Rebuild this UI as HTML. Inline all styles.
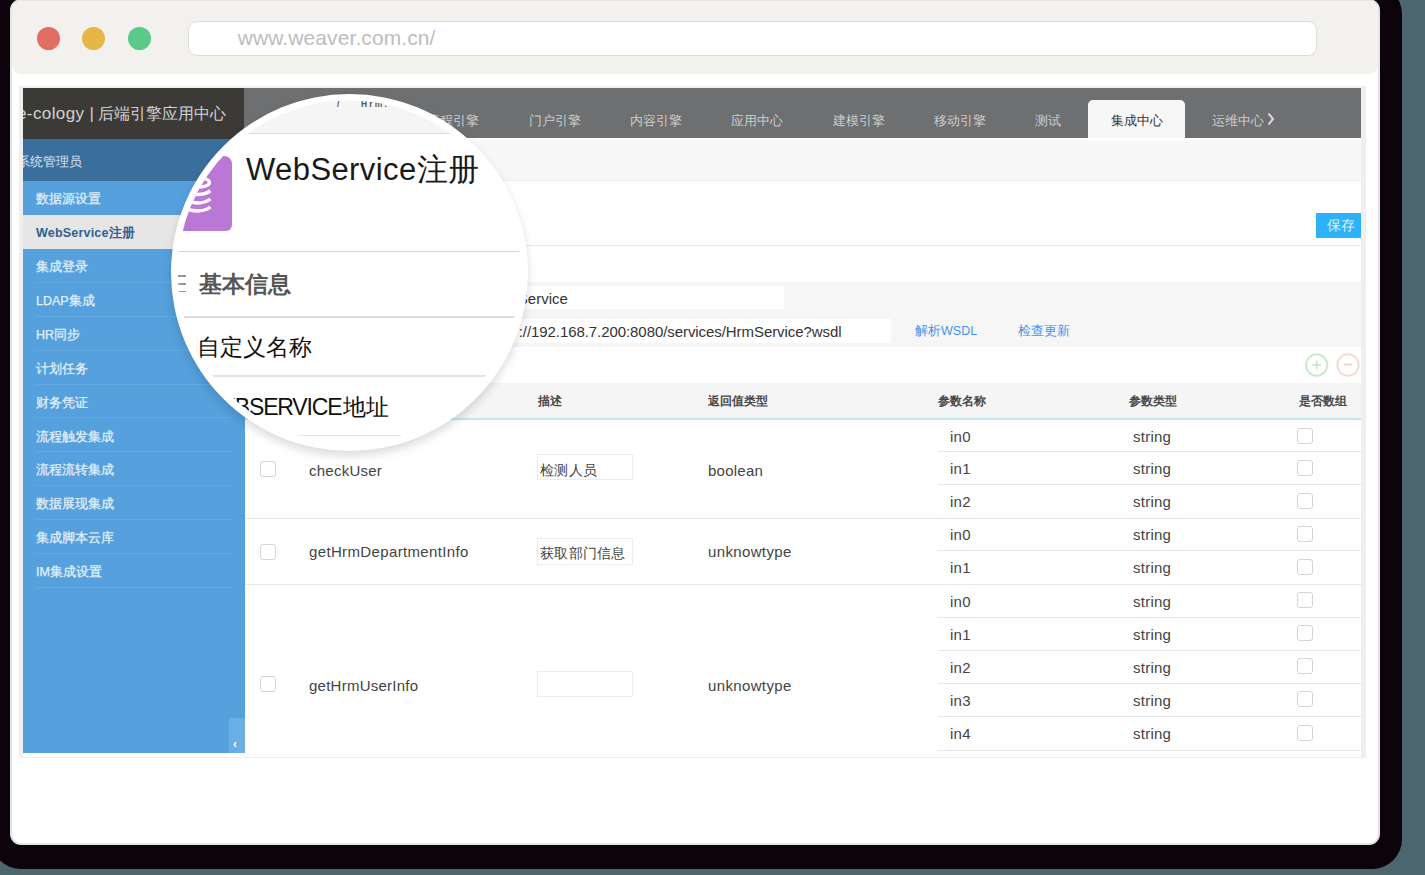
<!DOCTYPE html>
<html><head><meta charset="utf-8">
<style>
*{box-sizing:border-box;margin:0;padding:0}
html,body{width:1425px;height:875px;overflow:hidden;background:#4c6670;font-family:"Liberation Sans",sans-serif}
.a{position:absolute}
#dark{left:-8.6px;top:-16.3px;width:1410.2px;height:885.3px;background:#0d030a;border-radius:30px}
#win{left:9.8px;top:-1px;width:1369.8px;height:845.5px;background:#fff;border:2px solid #e4e4e4;border-radius:11px;overflow:hidden}
#tool{left:0;top:0;width:1365.8px;height:73.3px;background:#f2f1ed;border-radius:0 0 9px 9px}
.dot{width:23px;height:23px;border-radius:50%;top:25.8px}
#url{left:175.9px;top:20px;width:1129.3px;height:34.6px;background:#fff;border:1px solid #dcdcdc;border-radius:9px}
#urlt{left:49px;top:4.5px;font-size:21px;color:#bdbdbd;white-space:nowrap;letter-spacing:0.1px}
/* inner screenshot */
#frame{left:19px;top:85.5px;width:1347px;height:672.5px;background:#efefef}
#framein{left:4px;top:3px;width:1337.7px;height:668.5px;background:#fff}
.t{white-space:nowrap;line-height:1}
.side{left:23px;width:222px;height:33.9px;background:#55a0dd}
.side span{position:absolute;left:13px;top:10px;font-size:12.5px;color:#e4f1fb;font-weight:normal;white-space:nowrap;-webkit-text-stroke:0.25px #e4f1fb}
.sep{position:absolute;left:13px;right:13px;bottom:0;height:1px;background:#62a9e2}
.tab{top:113.5px;font-size:13px;color:#cdcdcd;white-space:nowrap;line-height:1}
.hl{height:1px;background:#e8e8e8}
.cb{width:16px;height:16px;border:1px solid #d4d4d4;border-radius:3px;background:#fff}
.cell{font-size:15px;color:#444;white-space:nowrap;line-height:1;letter-spacing:0.25px}
.inp{left:537px;width:95.5px;height:26.2px;border:1px solid #ececec;background:#fff}
.hd{top:395px;font-size:12px;color:#484848;font-weight:bold;white-space:nowrap;line-height:1}
</style></head><body>
<div class="a" id="dark"></div>
<div class="a" id="win">
  <div class="a" id="tool">
    <div class="a dot" style="left:25.3px;background:#e06e62"></div>
    <div class="a dot" style="left:70.7px;background:#e6b745"></div>
    <div class="a dot" style="left:116.2px;background:#5ac98a"></div>
    <div class="a" id="url"><div class="a t" id="urlt">www.weaver.com.cn/</div></div>
  </div>
</div>
<div class="a" id="frame"><div class="a" id="framein"></div></div>
<!-- header -->
<div class="a" style="left:23px;top:88px;width:221px;height:51px;background:#3b3a37;overflow:hidden">
  <div class="a t" style="left:-6px;top:17px;font-size:17px;color:#d2d2d2"><span style="letter-spacing:0.4px">e-cology |</span><span style="font-size:16px;margin-left:3.5px">后端引擎应用中心</span></div>
</div>
<div class="a" style="left:244px;top:88px;width:1117px;height:50px;background:#6d6f70"></div>
<div class="a tab" style="left:427px">流程引擎</div>
<div class="a tab" style="left:529px">门户引擎</div>
<div class="a tab" style="left:630px">内容引擎</div>
<div class="a tab" style="left:731px">应用中心</div>
<div class="a tab" style="left:833px">建模引擎</div>
<div class="a tab" style="left:934px">移动引擎</div>
<div class="a tab" style="left:1035px">测试</div>
<div class="a" style="left:1088px;top:100px;width:97px;height:38px;background:#f7f7f7;border-radius:5px 5px 0 0"></div>
<div class="a tab" style="left:1111px;color:#333">集成中心</div>
<div class="a tab" style="left:1212px">运维中心</div><svg class="a" style="left:1267px;top:112px" width="8" height="14"><path d="M1.5 1.5 L6 7 L1.5 12.5" fill="none" stroke="#d8d8d8" stroke-width="2"/></svg>
<!-- sidebar -->
<div class="a" style="left:23px;top:139px;width:222px;height:614px;background:#55a0dd"></div>
<div class="a" style="left:23px;top:139px;width:222px;height:42px;background:#3a6e9d;overflow:hidden">
  <span class="a t" style="left:-6.5px;top:17px;font-size:12.5px;color:#dae5f0">系统管理员</span>
</div>
<div class="a side" style="top:181px"><span>数据源设置</span></div>
<div class="a side" style="top:215px;background:#e6e6e6"><span style="color:#30608f;font-weight:bold;-webkit-text-stroke:0;letter-spacing:0.2px">WebService注册</span></div>
<div class="a side" style="top:249.0px"><span>集成登录</span><div class="sep"></div></div>
<div class="a side" style="top:282.9px"><span>LDAP集成</span><div class="sep"></div></div>
<div class="a side" style="top:316.8px"><span>HR同步</span><div class="sep"></div></div>
<div class="a side" style="top:350.7px"><span>计划任务</span><div class="sep"></div></div>
<div class="a side" style="top:384.6px"><span>财务凭证</span><div class="sep"></div></div>
<div class="a side" style="top:418.5px"><span>流程触发集成</span><div class="sep"></div></div>
<div class="a side" style="top:452.4px"><span>流程流转集成</span><div class="sep"></div></div>
<div class="a side" style="top:486.3px"><span>数据展现集成</span><div class="sep"></div></div>
<div class="a side" style="top:520.2px"><span>集成脚本云库</span><div class="sep"></div></div>
<div class="a side" style="top:554.1px"><span>IM集成设置</span><div class="sep"></div></div>
<div class="a" style="left:229px;top:718px;width:16px;height:35px;background:#6aaee3"><span class="a t" style="left:4px;top:20px;font-size:12px;color:#fff;font-weight:bold">‹</span></div>
<!-- content -->
<div class="a" style="left:245px;top:138px;width:1116px;height:43px;background:linear-gradient(#fff,#f7f7f7 5px);border-bottom:1px solid #ececec"></div>
<div class="a" style="left:1316px;top:213px;width:44.5px;height:24.5px;background:#2bb2f9"><span class="a t" style="left:11px;top:5px;font-size:14px;color:#e2f3fd">保存</span></div>
<div class="a hl" style="left:245px;top:245px;width:1116px"></div>
<div class="a" style="left:245px;top:281.5px;width:1116px;height:65.5px;background:#f6f6f6"></div>
<div class="a" style="left:380px;top:286px;width:404px;height:23px;background:#fff"></div>
<div class="a t" style="left:489.5px;top:291px;font-size:15px;color:#333">HrmService</div>
<div class="a" style="left:380px;top:319px;width:511px;height:23.5px;background:#fff"></div>
<div class="a t" style="left:518.7px;top:324px;font-size:15px;color:#333;letter-spacing:-0.07px">://192.168.7.200:8080/services/HrmService?wsdl</div>
<div class="a t" style="left:915px;top:325px;font-size:12.5px;color:#4592ef">解析WSDL</div>
<div class="a t" style="left:1018px;top:325px;font-size:12.5px;color:#4592ef">检查更新</div>
<svg class="a" style="left:1300px;top:348px" width="66" height="34"><g fill="none" stroke-width="2">
<circle cx="16.6" cy="17" r="10.7" stroke="#cbebce"/><path d="M12 17 H21 M16.6 12.5 V21.5" stroke="#bfe5c4" stroke-width="1.6"/>
<circle cx="48" cy="17" r="10.7" stroke="#f3dcd3"/><path d="M43.5 16.5 H52.5" stroke="#f1d3c6" stroke-width="1.8"/>
</g></svg>
<!-- table header -->
<div class="a" style="left:245px;top:382.5px;width:1116px;height:37.5px;background:#f5f5f5;border-bottom:2.5px solid #c4e4fb"></div>
<div class="a hd" style="left:538px">描述</div>
<div class="a hd" style="left:708px">返回值类型</div>
<div class="a hd" style="left:938px">参数名称</div>
<div class="a hd" style="left:1129px">参数类型</div>
<div class="a hd" style="left:1299px">是否数组</div>
<!-- rows -->
<div class="a hl" style="left:938px;top:451px;width:423px"></div>
<div class="a hl" style="left:938px;top:484px;width:423px"></div>
<div class="a hl" style="left:245px;top:518px;width:1116px"></div>
<div class="a hl" style="left:938px;top:550px;width:423px"></div>
<div class="a hl" style="left:245px;top:584px;width:1116px"></div>
<div class="a hl" style="left:938px;top:617px;width:423px"></div>
<div class="a hl" style="left:938px;top:650px;width:423px"></div>
<div class="a hl" style="left:938px;top:683px;width:423px"></div>
<div class="a hl" style="left:938px;top:716px;width:423px"></div>
<div class="a hl" style="left:938px;top:750px;width:423px"></div>
<div class="a cb" style="left:260px;top:460.5px"></div>
<div class="a cell" style="left:309px;top:462.6px">checkUser</div>
<div class="a inp" style="top:454px"></div>
<div class="a cell" style="left:540px;top:462.5px;font-size:14px">检测人员</div>
<div class="a cell" style="left:708px;top:462.6px">boolean</div>

<div class="a cb" style="left:260px;top:543.5px"></div>
<div class="a cell" style="left:309px;top:544px;letter-spacing:0.36px">getHrmDepartmentInfo</div>
<div class="a inp" style="top:538.4px"></div>
<div class="a cell" style="left:540px;top:545.5px;font-size:14px">获取部门信息</div>
<div class="a cell" style="left:708px;top:544px;letter-spacing:0.36px">unknowtype</div>

<div class="a cb" style="left:260px;top:676px"></div>
<div class="a cell" style="left:309px;top:678.3px">getHrmUserInfo</div>
<div class="a inp" style="top:670.5px"></div>
<div class="a cell" style="left:708px;top:678.3px;letter-spacing:0.36px">unknowtype</div>

<div class="a cell" style="left:950px;top:429.0px">in0</div><div class="a cell" style="left:1133px;top:429.0px">string</div><div class="a cb" style="left:1297px;top:427.7px"></div>
<div class="a cell" style="left:950px;top:461.2px">in1</div><div class="a cell" style="left:1133px;top:461.2px">string</div><div class="a cb" style="left:1297px;top:459.9px"></div>
<div class="a cell" style="left:950px;top:494.4px">in2</div><div class="a cell" style="left:1133px;top:494.4px">string</div><div class="a cb" style="left:1297px;top:493.1px"></div>
<div class="a cell" style="left:950px;top:527.3px">in0</div><div class="a cell" style="left:1133px;top:527.3px">string</div><div class="a cb" style="left:1297px;top:526.0px"></div>
<div class="a cell" style="left:950px;top:560.3px">in1</div><div class="a cell" style="left:1133px;top:560.3px">string</div><div class="a cb" style="left:1297px;top:559.0px"></div>
<div class="a cell" style="left:950px;top:593.5px">in0</div><div class="a cell" style="left:1133px;top:593.5px">string</div><div class="a cb" style="left:1297px;top:592.2px"></div>
<div class="a cell" style="left:950px;top:626.7px">in1</div><div class="a cell" style="left:1133px;top:626.7px">string</div><div class="a cb" style="left:1297px;top:625.4px"></div>
<div class="a cell" style="left:950px;top:659.7px">in2</div><div class="a cell" style="left:1133px;top:659.7px">string</div><div class="a cb" style="left:1297px;top:658.4px"></div>
<div class="a cell" style="left:950px;top:692.6px">in3</div><div class="a cell" style="left:1133px;top:692.6px">string</div><div class="a cb" style="left:1297px;top:691.3px"></div>
<div class="a cell" style="left:950px;top:725.9px">in4</div><div class="a cell" style="left:1133px;top:725.9px">string</div><div class="a cb" style="left:1297px;top:724.6px"></div>

<!-- magnifier -->
<div class="a" style="left:170.7px;top:93.5px;width:357px;height:357px;border-radius:50%;background:#fff;box-shadow:0 5px 10px rgba(0,0,0,0.14)"></div>
<div class="a" style="left:0;top:0;width:1425px;height:875px;clip-path:circle(171.5px at 349.2px 272px)">
  <div class="a" style="left:170px;top:90px;width:360px;height:43.5px;background:#f5f5f5;border-bottom:1.5px solid #dcdcdc"></div>
  <div class="a t" style="left:337px;top:100px;font-size:8.5px;color:#555;font-weight:bold">/</div><div class="a t" style="left:361px;top:100px;font-size:8.5px;color:#555;font-weight:bold;letter-spacing:2.2px">Hrm.</div>
  <div class="a" style="left:165px;top:156.2px;width:67.1px;height:75.1px;background:#bb77d6;border-radius:8px 8px 6px 6px"></div>
  <svg class="a" style="left:0;top:0" width="1425" height="875"><g fill="none" stroke="#fff" stroke-width="3.3">
    <ellipse cx="199" cy="182.5" rx="10.5" ry="4.5"/>
    <path d="M186 191 Q199 198 210.5 191"/><path d="M184 199 Q199 207 210.5 199"/><path d="M182 207 Q199 215 210.5 207"/>
  </g></svg>
  <div class="a t" style="left:246px;top:154px;font-size:31px;color:#1a1a1a"><span style="letter-spacing:0.4px">WebService</span>注册</div>
  <div class="a" style="left:170px;top:250.5px;width:360px;height:1.5px;background:#d8d8d8"></div>
  <div class="a" style="left:178px;top:275px;width:8px;height:1.5px;background:#999"></div>
  <div class="a" style="left:178px;top:283px;width:8px;height:1.5px;background:#999"></div>
  <div class="a" style="left:178px;top:290.5px;width:8px;height:1.5px;background:#999"></div>
  <div class="a t" style="left:199px;top:273px;font-size:23px;color:#555;font-weight:bold">基本信息</div>
  <div class="a" style="left:170px;top:316px;width:360px;height:1.5px;background:#dedede"></div>
  <div class="a t" style="left:197px;top:335.5px;font-size:23px;color:#111">自定义名称</div>
  <div class="a" style="left:170px;top:375px;width:360px;height:1.5px;background:#e2e2e2"></div>
  <div class="a t" style="left:200px;top:396px;font-size:23px;color:#111"><span style="letter-spacing:-1.15px">WEBSERVICE</span><span style="margin-left:1.5px">地址</span></div>
  <div class="a" style="left:170px;top:434.5px;width:360px;height:1.5px;background:#e6e6e6"></div>
</div>
</body></html>
